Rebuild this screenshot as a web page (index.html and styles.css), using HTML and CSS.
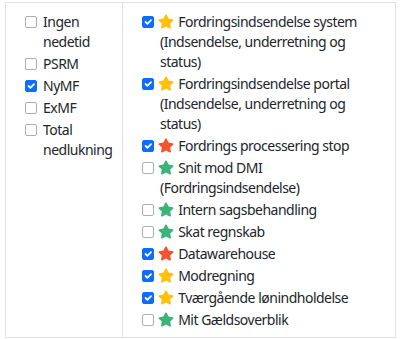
FILE: index.html
```html
<!DOCTYPE html>
<html lang="da">
  <head>
    <meta charset="UTF-8" />
    <meta name="viewport" content="width=device-width, initial-scale=1.0" />
    <title>Driftsstatus</title>
    <link rel="stylesheet" href="styles.css">
  </head>
  <body>
    <svg width="0" height="0" class="defs">
      <symbol id="star" viewBox="0 0 576 512">
        <path d="M259.3 17.8L194 150.2 47.9 171.5c-26.2 3.8-36.7 36.1-17.7 54.6l105.7 103-25 145.5c-4.5 26.3 23.2 46 46.4 33.7L288 439.6l130.7 68.7c23.2 12.2 50.9-7.4 46.4-33.7l-25-145.5 105.7-103c19-18.5 8.5-50.8-17.7-54.6L382 150.2 316.7 17.8c-11.7-23.6-45.6-23.9-57.4 0z" />
      </symbol>
    </svg>

    <table class="status-table">
      <tr>
        <td class="col-modes">
          <div class="check"><input type="checkbox" id="m1" /><label for="m1">Ingen nedetid</label></div>
          <div class="check"><input type="checkbox" id="m2" /><label for="m2">PSRM</label></div>
          <div class="check"><input type="checkbox" id="m3" checked /><label for="m3">NyMF</label></div>
          <div class="check"><input type="checkbox" id="m4" /><label for="m4">ExMF</label></div>
          <div class="check"><input type="checkbox" id="m5" /><label for="m5">Total nedlukning</label></div>
        </td>
        <td class="col-systems">
          <div class="check">
            <input type="checkbox" id="s1" checked />
            <label for="s1"><svg class="star yellow"><use href="#star" /></svg> Fordringsindsendelse system (Indsendelse, underretning og status)</label>
          </div>
          <div class="check">
            <input type="checkbox" id="s2" checked />
            <label for="s2"><svg class="star yellow"><use href="#star" /></svg> Fordringsindsendelse portal (Indsendelse, underretning og status)</label>
          </div>
          <div class="check">
            <input type="checkbox" id="s3" checked />
            <label for="s3"><svg class="star red"><use href="#star" /></svg> Fordrings processering stop</label>
          </div>
          <div class="check">
            <input type="checkbox" id="s4" />
            <label for="s4"><svg class="star green"><use href="#star" /></svg> Snit mod DMI (Fordringsindsendelse)</label>
          </div>
          <div class="check">
            <input type="checkbox" id="s5" />
            <label for="s5"><svg class="star green"><use href="#star" /></svg> Intern sagsbehandling</label>
          </div>
          <div class="check">
            <input type="checkbox" id="s6" />
            <label for="s6"><svg class="star green"><use href="#star" /></svg> Skat regnskab</label>
          </div>
          <div class="check">
            <input type="checkbox" id="s7" checked />
            <label for="s7"><svg class="star red"><use href="#star" /></svg> Datawarehouse</label>
          </div>
          <div class="check">
            <input type="checkbox" id="s8" checked />
            <label for="s8"><svg class="star yellow"><use href="#star" /></svg> Modregning</label>
          </div>
          <div class="check">
            <input type="checkbox" id="s9" checked />
            <label for="s9"><svg class="star yellow"><use href="#star" /></svg> Tværgående lønindholdelse</label>
          </div>
          <div class="check">
            <input type="checkbox" id="s10" />
            <label for="s10"><svg class="star green"><use href="#star" /></svg> Mit Gældsoverblik</label>
          </div>
        </td>
      </tr>
    </table>
  </body>
</html>
```

FILE: styles.css
```css
body {
  font-family: "Noto Sans", "Open Sans", sans-serif;
  font-size: 14px;
  letter-spacing: -0.5px;
  color: #212529;
  margin: 0;
  background: #fff;
}

.defs {
  position: absolute;
}

.status-table {
  border-collapse: collapse;
  table-layout: fixed;
  margin: 2px 0 0 5px;
  width: 391px;
}

.status-table td {
  border: 1px solid #dee2e6;
  vertical-align: top;
  padding: 9px 8px 7px 19px;
}

.col-modes {
  width: 89px;
}

.check {
  padding-left: 18px;
  line-height: 20px;
  margin-bottom: 2px;
}

.check:last-child {
  margin-bottom: 0;
}

.check input {
  appearance: none;
  float: left;
  margin: 4px 0 0 -18px;
  width: 12px;
  height: 12px;
  border: 1px solid #adadad;
  border-radius: 2px;
  background: #fff;
}

.check input:checked {
  border-color: #0d6efd;
  background: #0d6efd url("data:image/svg+xml,%3csvg xmlns='http://www.w3.org/2000/svg' viewBox='0 0 20 20'%3e%3cpath fill='none' stroke='%23fff' stroke-linecap='round' stroke-linejoin='round' stroke-width='3' d='M6 10l3 3l6-6'/%3e%3c/svg%3e") center / 12px no-repeat;
}

.star {
  width: 16px;
  height: 15px;
  vertical-align: -2px;
  margin-left: -2px;
  margin-right: 1px;
}

.star.yellow {
  fill: #ffc107;
}

.star.red {
  fill: #f4532f;
}

.star.green {
  fill: #3cb37a;
}
```
